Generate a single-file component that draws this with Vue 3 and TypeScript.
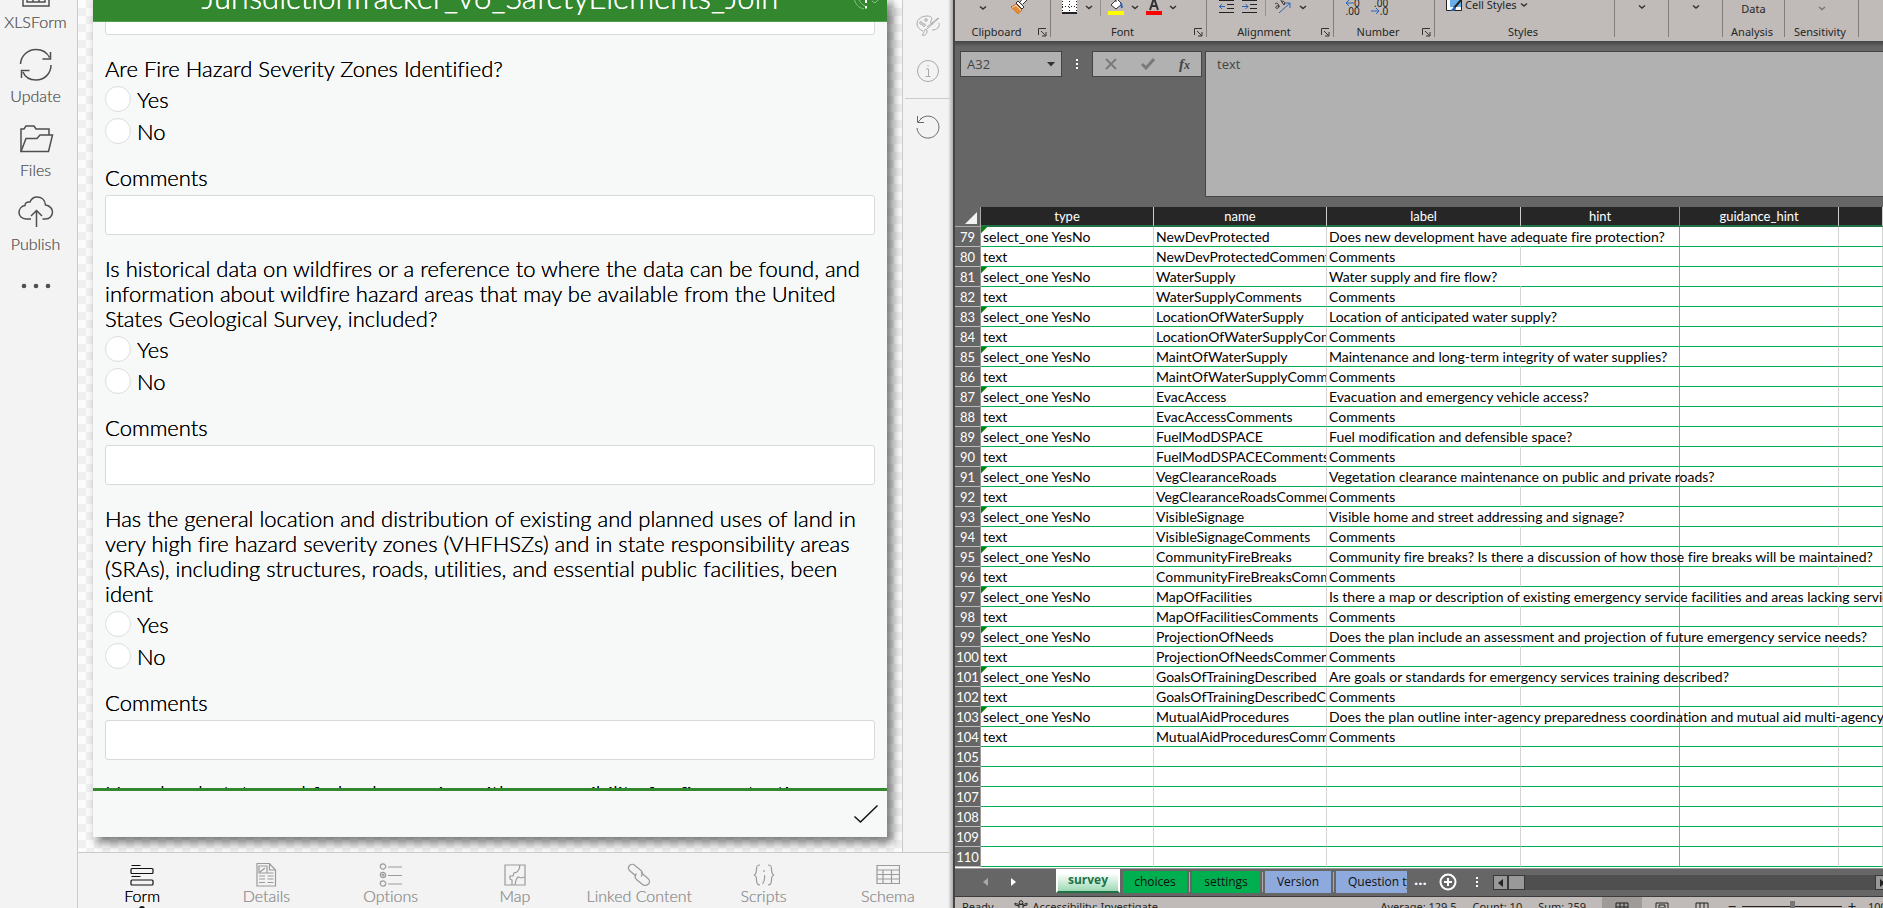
<script setup lang="ts">
import { ref } from 'vue'

interface Question {
  id: string
  text: string
}

const questions: Question[] = [
  { id: 'zones', text: 'Are Fire Hazard Severity Zones Identified?' },
  {
    id: 'history',
    text: 'Is historical data on wildfires or a reference to where the data can be found, and information about wildfire hazard areas that may be available from the United States Geological Survey, included?',
  },
  {
    id: 'location',
    text: 'Has the general location and distribution of existing and planned uses of land in very high fire hazard severity zones (VHFHSZs) and in state responsibility areas (SRAs), including structures, roads, utilities, and essential public facilities, been ident',
  },
]
const nextQuestion = 'Have local, state, and federal agencies with responsibility for fire protection'

const sideItems = ['XLSForm', 'Update', 'Files', 'Publish']
const navItems = ['Form', 'Details', 'Options', 'Map', 'Linked Content', 'Scripts', 'Schema']

interface Row {
  n: number
  name: string
  label: string
  question: boolean
  wide: boolean
}

const pairs: [string, string][] = [
  ['NewDevProtected', 'Does new development have adequate fire protection?'],
  ['WaterSupply', 'Water supply and fire flow?'],
  ['LocationOfWaterSupply', 'Location of anticipated water supply?'],
  ['MaintOfWaterSupply', 'Maintenance and long-term integrity of water supplies?'],
  ['EvacAccess', 'Evacuation and emergency vehicle access?'],
  ['FuelModDSPACE', 'Fuel modification and defensible space?'],
  ['VegClearanceRoads', 'Vegetation clearance maintenance on public and private roads?'],
  ['VisibleSignage', 'Visible home and street addressing and signage?'],
  ['CommunityFireBreaks', 'Community fire breaks? Is there a discussion of how those fire breaks will be maintained?'],
  ['MapOfFacilities', 'Is there a map or description of existing emergency service facilities and areas lacking service?'],
  ['ProjectionOfNeeds', 'Does the plan include an assessment and projection of future emergency service needs?'],
  ['GoalsOfTrainingDescribed', 'Are goals or standards for emergency services training described?'],
  ['MutualAidProcedures', 'Does the plan outline inter-agency preparedness coordination and mutual aid multi-agency agreements?'],
]

const rows: Row[] = pairs.flatMap(([name, label], i) => [
  { n: 79 + i * 2, name, label, question: true, wide: label.length > 80 },
  { n: 80 + i * 2, name: name + 'Comments', label: 'Comments', question: false, wide: false },
])
for (let n = 105; n <= 110; n++) rows.push({ n, name: '', label: '', question: false, wide: false })

const cellRef = ref('A32')
const formula = ref('text')
const zoom = ref(50)
</script>

<template>
  <div class="desktop">
    <section class="survey">
      <nav class="side" aria-label="Survey actions">
        <button v-for="item in sideItems" :key="item" class="side-item" type="button">
          <svg v-if="item === 'XLSForm'" width="36" height="36" viewBox="0 0 36 36">
            <rect x="5" y="2" width="26" height="31" />
            <path d="M9 14h18v15H9zM15 14v15M21 14v15M9 19h18M9 24h18" />
          </svg>
          <svg v-else-if="item === 'Update'" width="36" height="36" viewBox="0 0 36 36">
            <path d="M2.500 17C3 8.500 10 2.500 18 2.500c6 0 11 3 13.500 8M32.500 5v7h-8" />
            <path d="M33 18c0 9-7 15-15 15-6 0-11-3-13-8M3.500 31v-7.500h8" />
          </svg>
          <svg v-else-if="item === 'Files'" width="36" height="36" viewBox="0 0 36 36">
            <path d="M3 30.500V8h3l2-3h8l2 3h13v6" />
            <path d="M3 30.500h27.500L34.500 14H22l-3 3.500H8z" />
          </svg>
          <svg v-else width="36" height="36" viewBox="0 0 36 36">
            <path d="M13 24H8c-4 0-7-3-7-6.500S3.500 11 7 10.500c0-2.500 2-4 5-3.500 1.500-3.500 4-5 7-5 4.500 0 8 3 8.500 8 4 .5 7 3.500 7 7 0 4-3 7-7 7h-3" />
            <path d="M18.500 32V15.500M13 21l5.500-5.500L24 21" />
          </svg>
          <span>{{ item }}</span>
        </button>
        <button class="more" type="button" aria-label="More">
          <svg width="30" height="6" viewBox="0 0 30 6">
            <circle cx="3" cy="3" r="2.300" /><circle cx="15" cy="3" r="2.300" /><circle cx="27" cy="3" r="2.300" />
          </svg>
        </button>
      </nav>

      <div class="work">
        <div class="stage">
          <div class="canvas">
            <form class="card" @submit.prevent>
              <header class="card-head">
                <h1>JurisdictionTracker_v6_SafetyElements_Join</h1>
                <svg class="sat" width="28" height="24" viewBox="0 0 28 24">
                  <path d="M2 10c1 6 5 10 10 11M6 9c1 4 4 8 7 9M20 13l3 2 4-4" />
                  <path class="bang" d="M14 8v7M14 18v2.500" />
                </svg>
              </header>
              <div class="card-body">
                <div class="fields">
                  <input class="box" type="text" aria-label="Previous comments" />
                  <fieldset v-for="q in questions" :key="q.id">
                    <legend>{{ q.text }}</legend>
                    <label class="choice"><input type="radio" :name="q.id" value="yes" />Yes</label>
                    <label class="choice"><input type="radio" :name="q.id" value="no" />No</label>
                    <label class="caption" :for="q.id + '-c'">Comments</label>
                    <input :id="q.id + '-c'" class="box" type="text" />
                  </fieldset>
                  <p class="next">{{ nextQuestion }}</p>
                </div>
              </div>
              <footer class="card-foot">
                <button type="submit" aria-label="Submit">
                  <svg width="26" height="20" viewBox="0 0 26 20"><path d="M1.500 12.500l6 5.500L24.500 1.500" /></svg>
                </button>
              </footer>
            </form>
          </div>
          <aside class="rail">
            <button type="button" aria-label="Style">
              <svg width="24" height="24" viewBox="0 0 24 24">
                <path d="M7 17c-3-1-6-4-6-7 0-5 5-8 10-8 4 0 6 2 4 5-1 2 0 3 2 3M23 9c1 4-2 7-7 7" />
                <circle cx="5" cy="9" r="1.300" /><circle cx="10" cy="6" r="1.300" /><circle cx="8" cy="11" r="1.300" />
                <path d="M23 4L11 15M22 4L11 13M10 15c-2 0-2 5-4 6 3 1 5-1 5-4z" />
              </svg>
            </button>
            <button type="button" aria-label="Information">
              <svg width="24" height="24" viewBox="0 0 24 24">
                <circle cx="12" cy="12" r="10.500" />
                <path d="M10 10h2.500v7M9.500 17.500h5M12 6v1.500" />
              </svg>
            </button>
            <hr />
            <button class="undo" type="button" aria-label="Undo">
              <svg width="24" height="24" viewBox="0 0 24 24">
                <path d="M1 13a11 11 0 1 0 3-8.500M1.500 1v6.500H8M2 7l4-4" />
              </svg>
            </button>
          </aside>
        </div>

        <nav class="bottom" aria-label="Views">
          <button v-for="item in navItems" :key="item" type="button" :class="{ active: item === 'Form' }">
            <svg v-if="item === 'Form'" width="24" height="24" viewBox="0 0 24 24">
              <path d="M1.500 2.500h9M1.500 13.500h9" />
              <rect x="1" y="5.500" width="22" height="5" rx="1" /><rect x="1" y="17" width="22" height="5" rx="1" />
            </svg>
            <svg v-else-if="item === 'Details'" width="24" height="24" viewBox="0 0 24 24">
              <path d="M3 .5h12.500L21.500 7v16H3zM15.500 .5V7h6M5 3h8v7H5zM6 9l5-4M5 13h6M5 16h6M5 19.500h6M13.500 10h6M13.500 13h6M13.500 16h6M13.500 19.500h6" />
            </svg>
            <svg v-else-if="item === 'Options'" width="24" height="24" viewBox="0 0 24 24">
              <circle cx="4" cy="3.500" r="2.700" /><circle cx="4" cy="12" r="2.700" /><circle cx="4" cy="20.500" r="2.700" />
              <circle cx="4" cy="12" r="1" />
              <path d="M9 4h14M9 12.500h14M9 21h14" />
            </svg>
            <svg v-else-if="item === 'Map'" width="24" height="24" viewBox="0 0 24 24">
              <path d="M2 2h20v20H2zM17 2c0 3-1 5-3 7l-3 1-1 3H7v3l2 1v5M22 14l-4 1-3-1-2 3-1 5" />
            </svg>
            <svg v-else-if="item === 'Linked Content'" width="24" height="24" viewBox="0 0 24 24">
              <path d="M9 13L3 8C1 6 1 4 2.500 2.500S6.500 1 8 2.500l6 5c2 2 2 4 0 6" />
              <path d="M14 9.500l7 6c2 2 2 4 .5 5.500S17 23 15.500 21.500l-6-5c-2-2-2-4 0-6" />
            </svg>
            <svg v-else-if="item === 'Scripts'" width="24" height="24" viewBox="0 0 24 24">
              <path d="M8 2C5 2 4.500 3 4.500 6S4 11.500 2 12c2 .5 2.500 2 2.500 5S5 22 8 22M16 2c3 0 3.500 1 3.500 4s.5 5.500 2.500 6c-2 .5-2.500 2-2.500 5s-.5 5-3.500 5M12 7v2M12.500 12c.5 4-.5 7-2 9" />
            </svg>
            <svg v-else width="24" height="24" viewBox="0 0 24 24">
              <path d="M1 2.500h22.500v18H1zM1 7h22.500M1 11.500h22.500M1 16h22.500M7 7v13.500M15.500 7v13.500" />
            </svg>
            <span>{{ item }}</span>
          </button>
        </nav>
      </div>
    </section>

    <section class="excel">
      <div class="ribbon">
        <div class="group g-clip">
          <div class="tools">
            <svg width="8" height="24" viewBox="0 0 8 24"><path class="chev" d="M1 14.500l3 2.500 3-2.500" /></svg>
            <svg width="18" height="24" viewBox="0 0 18 24">
              <path fill="#f3d3ac" stroke="#c66a1c" d="M2 15l5-3 6 6-4 4z" /><path fill="#e58a3a" d="M3 16l4-2 5 5-3 3z" />
              <path fill="#fff" stroke="#333" d="M7 11l2-2 6 6-2 2zM11 10l4-5h3v3l-4 4" />
            </svg>
          </div>
          <div class="name"><span>Clipboard</span><svg class="launch" width="9" height="9" viewBox="0 0 9 9"><path d="M.5 7V.5H8M3 3l4.500 4.500M8 4v4H4" /></svg></div>
        </div>
        <div class="group g-font">
          <div class="tools">
            <svg width="16" height="24" viewBox="0 0 16 24"><path fill="#fff" d="M0 0h15v22H0z" /><path stroke="#222" stroke-dasharray="1 2" d="M.5 0v20M7.500 0v20M14.500 0v20M0 14.500h15" /><path stroke="#222" stroke-width="2" d="M0 21h15" /></svg>
            <svg width="8" height="24" viewBox="0 0 8 24"><path class="chev" d="M1 14l3 2.500L7 14" /></svg>
            <i class="split"></i>
            <svg width="16" height="24" viewBox="0 0 16 24"><path fill="#fff" stroke="#333" d="M3 13l6-6 5 5-6 5z" /><path stroke="#333" d="M8 4v6" /><path stroke="#2b64b5" stroke-width="2" d="M13 11l1 5" /><path fill="#ff0" d="M0 19h16v4H0z" /></svg>
            <svg width="8" height="24" viewBox="0 0 8 24"><path class="chev" d="M1 14l3 2.500L7 14" /></svg>
            <svg width="16" height="24" viewBox="0 0 16 24"><path stroke="#333" stroke-width="2" d="M4 18L8 6l4 12M5.500 14h5" /><path fill="red" d="M0 19h16v4H0z" /></svg>
            <svg width="8" height="24" viewBox="0 0 8 24"><path class="chev" d="M1 14l3 2.500L7 14" /></svg>
          </div>
          <div class="name"><span>Font</span><svg class="launch" width="9" height="9" viewBox="0 0 9 9"><path d="M.5 7V.5H8M3 3l4.500 4.500M8 4v4H4" /></svg></div>
        </div>
        <div class="group g-align">
          <div class="tools">
            <svg width="15" height="24" viewBox="0 0 15 24"><path stroke="#222" d="M0 8.500h15M8 12.500h7M8 16.500h7M0 20.500h15" /><path stroke="#2b64b5" d="M0 14.500h6M3 12l-2.500 2.500L3 17" /></svg>
            <svg width="15" height="24" viewBox="0 0 15 24"><path stroke="#222" d="M0 8.500h15M8 12.500h7M8 16.500h7M0 20.500h15" /><path stroke="#2b64b5" d="M0 14.500h6M3.500 12L6 14.500 3.500 17" /></svg>
            <i class="split"></i>
            <svg width="17" height="24" viewBox="0 0 17 24"><path stroke="#333" d="M1 12c2-2 4 0 4 3M5 14c-2-1-4 1-3 2s3 0 3-2M6 7l4 6M7 10c2-2 5 0 3 3" /><path stroke="#2b64b5" d="M5 21L16 11M11 11h5v5" /></svg>
            <svg width="8" height="24" viewBox="0 0 8 24"><path class="chev" d="M1 14l3 2.500L7 14" /></svg>
          </div>
          <div class="name"><span>Alignment</span><svg class="launch" width="9" height="9" viewBox="0 0 9 9"><path d="M.5 7V.5H8M3 3l4.500 4.500M8 4v4H4" /></svg></div>
        </div>
        <div class="group g-num">
          <div class="tools">
            <span class="dec"><b><svg width="9" height="8" viewBox="0 0 9 8"><path stroke="#2b64b5" d="M9 4H1M4 1L1 4l3 3" /></svg>0</b><b>.00</b></span>
            <span class="dec"><b>.00</b><b><svg width="9" height="8" viewBox="0 0 9 8"><path stroke="#2b64b5" d="M0 4h8M5 1l3 3-3 3" /></svg>.0</b></span>
          </div>
          <div class="name"><span>Number</span><svg class="launch" width="9" height="9" viewBox="0 0 9 9"><path d="M.5 7V.5H8M3 3l4.500 4.500M8 4v4H4" /></svg></div>
        </div>
        <div class="group g-styles">
          <div class="tools">
            <svg width="16" height="24" viewBox="0 0 16 24"><path fill="#fff" stroke="#222" d="M.5 4.500h15v14H.5z" /><path fill="#69aee8" d="M4 8h11v7H4z" /><path stroke="#222" stroke-width="2" d="M15 8l-7 8" /><path fill="#2b64b5" d="M4 18c3 0 2-3 5-3l1 2c-1 2-4 3-6 1z" /></svg>
            <span>Cell Styles</span>
            <svg width="8" height="24" viewBox="0 0 8 24"><path class="chev" d="M1 11.500L4 14l3-2.500" /></svg>
          </div>
          <div class="name"><span>Styles</span></div>
        </div>
        <div v-for="g in 2" :key="g" class="group g-small">
          <div class="tools"><svg width="8" height="24" viewBox="0 0 8 24"><path class="chev" d="M1 13.500L4 16l3-2.500" /></svg></div>
          <div class="name"></div>
        </div>
        <div class="group g-data"><div class="tools"><span>Data</span></div><div class="name"><span>Analysis</span></div></div>
        <div class="group g-sens">
          <div class="tools"><svg width="8" height="24" viewBox="0 0 8 24"><path class="chev faint" d="M1 15l3 2.500L7 15" /></svg></div>
          <div class="name"><span>Sensitivity</span></div>
        </div>
      </div>

      <div class="fbar">
        <div class="namebox">
          <input v-model="cellRef" type="text" aria-label="Name box" />
          <button type="button" aria-label="Names"><svg width="8" height="5" viewBox="0 0 8 5"><path fill="#333" d="M0 0h8L4 4.500z" /></svg></button>
        </div>
        <i class="grip"></i>
        <div class="fx">
          <button type="button" aria-label="Cancel"><svg width="12" height="12" viewBox="0 0 12 12"><path stroke="#7a7a7a" stroke-width="2" d="M1 1l10 10M11 1L1 11" /></svg></button>
          <button type="button" aria-label="Enter"><svg width="14" height="12" viewBox="0 0 14 12"><path stroke="#7a7a7a" stroke-width="3" d="M1 6l4 4 8-9" /></svg></button>
          <button class="fn" type="button">f<small>x</small></button>
        </div>
        <textarea v-model="formula" aria-label="Formula"></textarea>
      </div>

      <div class="sheet">
        <table>
          <colgroup><col class="c-n" /><col class="c-a" /><col class="c-a" /><col class="c-l" /><col class="c-h" /><col class="c-h" /><col /></colgroup>
          <thead>
            <tr>
              <td class="corner"><svg width="12" height="12" viewBox="0 0 12 12"><path fill="#f2f2f2" d="M12 0v12H0z" /></svg></td>
              <th>type</th><th>name</th><th>label</th><th class="freeze">hint</th><th>guidance_hint</th><th></th>
            </tr>
          </thead>
          <tbody>
            <tr v-for="r in rows" :key="r.n" :class="{ q: r.question, wide: r.wide }">
              <th scope="row">{{ r.n }}</th>
              <td class="type">{{ r.name ? (r.question ? 'select_one YesNo' : 'text') : '' }}</td>
              <td class="clip">{{ r.name }}</td>
              <td class="lab">{{ r.label }}</td>
              <td class="freeze"></td>
              <td class="gh"></td>
              <td></td>
            </tr>
          </tbody>
        </table>
      </div>

      <div class="tabs">
        <div class="arrows">
          <button type="button" aria-label="Previous sheets"><svg width="5" height="8" viewBox="0 0 5 8"><path fill="#aaa" d="M5 0v8L0 4z" /></svg></button>
          <button type="button" aria-label="Next sheets"><svg width="5" height="8" viewBox="0 0 5 8"><path fill="#fff" d="M0 0v8l5-4z" /></svg></button>
        </div>
        <button class="tab current" type="button">survey</button>
        <button class="tab green choices" type="button">choices</button>
        <i class="bar"></i>
        <button class="tab green settings" type="button">settings</button>
        <i class="bar"></i>
        <button class="tab blue" type="button">Version</button>
        <i class="bar"></i>
        <button class="tab blue cut" type="button">Question types</button>
        <span class="dots">...</span>
        <button class="add" type="button" aria-label="New sheet"><svg width="18" height="18" viewBox="0 0 18 18"><circle cx="9" cy="9" r="7.500" /><path d="M9 5v8M5 9h8" /></svg></button>
        <i class="grip"></i>
        <div class="scroll">
          <button type="button" aria-label="Scroll left"><svg width="5" height="8" viewBox="0 0 5 8"><path fill="#222" d="M5 0v8L0 4z" /></svg></button>
          <i class="thumb"></i>
          <i class="track"></i>
          <button class="end" type="button" aria-label="Scroll right"><svg width="5" height="8" viewBox="0 0 5 8"><path fill="#222" d="M0 0v8l5-4z" /></svg></button>
        </div>
      </div>

      <div class="status">
        <span class="ready">Ready</span>
        <svg width="14" height="16" viewBox="0 0 14 16"><path d="M1 3c3 2 9 2 12 0M5 5v5l-2 5M9 5v5l2 5M5 10h4M1 3v2l4 1M13 3v2L9 6" /><circle cx="7" cy="2.500" r="1.800" /></svg>
        <span>Accessibility: Investigate</span>
        <span class="sum first">Average: 129.5</span>
        <span class="sum">Count: 10</span>
        <span class="sum">Sum: 259</span>
        <button class="view on" type="button" aria-label="Normal"><svg width="14" height="14" viewBox="0 0 14 14"><path d="M1 1h12v12H1zM1 5h12M1 9h12M5 1v12M9 1v12" /></svg></button>
        <button class="view" type="button" aria-label="Page layout"><svg width="14" height="14" viewBox="0 0 14 14"><path d="M1 1h12v12H1zM4 3h6v9H4zM5 6h4M5 8h4" /></svg></button>
        <button class="view" type="button" aria-label="Page breaks"><svg width="14" height="14" viewBox="0 0 14 14"><path d="M1 1h12v12H1zM5 1v8M9 1v8M1 9h8" /></svg></button>
        <button class="sign minus" type="button">−</button>
        <input v-model="zoom" type="range" min="0" max="100" aria-label="Zoom" />
        <button class="sign" type="button">+</button>
        <span class="pct">100%</span>
      </div>
    </section>
  </div>
</template>

<style>
html, body { margin: 0; overflow: hidden; }
</style>

<style scoped>
* { box-sizing: border-box; }
button { margin: 0; padding: 0; border: 0; background: none; font: inherit; color: inherit; }
svg { display: block; flex: none; fill: none; }
i { flex: none; }
.desktop {
  display: grid;
  grid-template-columns: minmax(0, 953fr) minmax(0, 930fr);
  height: 100vh;
  overflow: hidden;
  background: #f3f3f3;
  font-variant-ligatures: none;
}

/* Survey designer */
.survey { display: flex; min-height: 0; font-family: Lato, sans-serif; font-weight: 300; color: #000; text-shadow: 0 0 0 currentColor; }
.side { width: 78px; flex: none; border-right: 1px solid #cacaca; background: #f3f3f3; display: flex; flex-direction: column; overflow: hidden; padding-right: 6px; }
.side-item { height: 74px; flex: none; padding-top: 8px; display: flex; flex-direction: column; align-items: center; gap: 2px; font-size: 16px; line-height: 21px; color: #666; text-shadow: inherit; }
.side-item:first-child { margin-top: -35px; }
.side-item svg { stroke: #4f4f4f; stroke-width: 1.500; }
.more { align-self: center; margin-top: 22px; }
.more svg { fill: #4f4f4f; }
.work { flex: 1; min-width: 0; display: flex; flex-direction: column; }
.stage { flex: 1; min-height: 0; display: flex; }
.canvas {
  flex: 1; min-width: 0; overflow: hidden; padding: 0 15px 15px;
  background: repeating-conic-gradient(#f0f0f0 0 25%, #fcfcfc 0 50%) 0 0 / 16px 16px;
}
.card { height: 100%; margin: 0; display: flex; flex-direction: column; background: #f7f8f8; box-shadow: 5px 5px 9px 1px rgba(0, 0, 0, .5); }
.card-head { position: relative; flex: none; height: 22px; padding-bottom: 6px; overflow: hidden; display: flex; align-items: flex-end; justify-content: center; background: #32872f; border-bottom: 1px solid #4fa04c; }
.card-head h1 { margin: 0; font-size: 31px; line-height: 36px; font-weight: 300; color: #fff; white-space: nowrap; }
.sat { position: absolute; right: 7px; bottom: 9px; stroke: #8fc08d; stroke-width: 1; }
.sat .bang { stroke: #fff; stroke-width: 2; }
.card-body { flex: 1; min-height: 0; overflow: hidden; padding: 0 12px; }
.fields { margin-top: -27px; font-size: 22px; line-height: 25px; }
fieldset { margin: 21px 0 0; padding: 0; border: 0; min-width: 0; display: flex; flex-direction: column; }
legend { padding: 0; margin-bottom: 5px; }
.choice { display: flex; align-items: center; gap: 6px; height: 26px; margin-bottom: 6px; }
.choice input { appearance: none; width: 26px; height: 26px; margin: 0; border: 1px solid #dcdede; border-radius: 50%; background: #fff; }
.caption { margin: 15px 0 5px; }
.box { display: block; width: 100%; height: 40px; padding: 0 8px; border: 1px solid #d8dada; border-radius: 3px; background: #fff; font: inherit; }
.next { margin: 21px 0 0; white-space: nowrap; }
.card-foot { flex: none; height: 49px; border-top: 3px solid #32872f; display: flex; align-items: center; justify-content: flex-end; padding-right: 8px; }
.card-foot svg { stroke: #111; stroke-width: 1.500; }
.rail { width: 51px; flex: none; border-left: 1px solid #cacaca; padding: 14px 3px 0 2px; display: flex; flex-direction: column; align-items: center; background: linear-gradient(to left, #aaa, #f3f3f3 5px); }
.rail button + button { margin-top: 21px; }
.rail svg { stroke: #a9a9a9; stroke-width: 1; }
.rail .undo { margin-top: 16px; }
.rail .undo svg { stroke: #6a6a6a; }
.rail hr { width: 100%; margin: 15px 0 0; border: 0; border-top: 1px solid #cacaca; }
.bottom { flex: none; height: 56px; padding: 10px 3px 0 2px; border-top: 1px solid #cacaca; display: flex; background: linear-gradient(to left, #aaa, #f3f3f3 5px); overflow: hidden; }
.bottom button { flex: 1 1 0; min-width: 0; display: flex; flex-direction: column; align-items: center; font-size: 16px; line-height: 21px; color: #979797; text-shadow: inherit; white-space: nowrap; }
.bottom svg { stroke: #9b9b9b; stroke-width: 1.200; margin-bottom: -2px; }
.bottom .active { color: #000; }
.bottom .active svg { stroke: #111; }
.bottom .active::after { content: ''; flex: none; width: 6px; height: 6px; border-radius: 50%; background: #111; }

/* Spreadsheet */
.excel { display: flex; flex-direction: column; min-height: 0; border-left: 2px solid #444; background: #666; font-family: "Noto Sans", sans-serif; font-size: 11px; color: #262626; }
.ribbon { flex: none; height: 41px; padding-bottom: 4px; overflow: hidden; display: flex; background: #c0bbb8; }
.group { flex: none; display: flex; flex-direction: column; justify-content: flex-end; border-right: 1px solid #827e7b; }
.g-clip { width: 96px; } .g-font { width: 156px; } .g-align { width: 127px; } .g-num { width: 101px; }
.g-styles { width: 180px; } .g-small { width: 54px; } .g-data { width: 62px; } .g-sens { width: 74px; }
.tools { flex: none; height: 24px; margin-bottom: 11px; display: flex; align-items: center; justify-content: center; gap: 7px; white-space: nowrap; line-height: 14px; }
.g-clip .tools { justify-content: flex-start; padding-left: 24px; gap: 22px; }
.g-font .tools { justify-content: flex-start; padding-left: 11px; }
.g-align .tools { justify-content: flex-start; padding-left: 12px; gap: 8px; }
.g-num .tools { justify-content: flex-start; padding-left: 11px; gap: 11px; }
.g-styles .tools { justify-content: flex-start; padding-left: 11px; gap: 3px; }
.g-styles .tools span { margin-top: 2px; }
.g-data .tools span { margin-top: 10px; }
.split { width: 1px; height: 24px; background: #96918e; }
.chev { stroke: #333; stroke-width: 1.500; }
.faint { stroke: #777; }
.dec { margin-top: 6px; display: flex; flex-direction: column; align-items: flex-end; font-size: 10px; line-height: 8px; color: #222; }
.dec b { display: flex; font-weight: 400; }
.name { flex: none; height: 10px; line-height: 10px; display: flex; align-items: center; padding-right: 3px; }
.name span { flex: 1; text-align: center; }
.launch { stroke: #333; stroke-width: 1; }

.fbar { flex: none; height: 166px; padding: 10px 0 9px 5px; display: flex; align-items: flex-start; background: linear-gradient(#444, #666 6px); font-family: "Open Sans", sans-serif; font-size: 13px; color: #444; }
.namebox, .fx { height: 26px; border: 1px solid #444; background: #b1b1b1; display: flex; align-items: center; }
.namebox { width: 102px; flex: none; padding-right: 6px; }
.namebox input { flex: 1; min-width: 0; padding: 0 6px; border: 0; background: none; font: inherit; color: inherit; }
.grip { width: 2px; height: 10px; background: repeating-linear-gradient(#fff 0 2px, transparent 2px 4px); }
.fbar .grip { margin: 8px 14px 0; }
.fx { width: 110px; flex: none; justify-content: space-between; padding: 0 11px 0 12px; }
.fn { font: italic bold 15px "Liberation Serif", serif; }
.fn small { font-size: 12px; }
.fbar textarea { flex: 1; min-width: 0; height: 146px; margin-left: 3px; padding: 3px 11px; border: 1px solid #444; border-right: 0; background: #b1b1b1; font: inherit; line-height: 18px; color: inherit; resize: none; outline: none; }

.sheet { flex: 1; min-height: 0; overflow: hidden; background: #fff; border-bottom: 1px solid #999; font-family: Lato, sans-serif; font-size: 14px; line-height: 18px; color: #000; }
table { width: 100%; table-layout: fixed; border-collapse: separate; border-spacing: 0; }
.c-n { width: 26px; } .c-a { width: 173px; } .c-l { width: 194px; } .c-h { width: 159px; }
td, th { height: 20px; padding: 0; font-weight: 400; white-space: nowrap; border-right: 1px solid #d4d4d4; border-bottom: 1px solid #00b050; }
thead th { background: #262626; color: #fff; font-size: 13px; text-align: center; line-height: 18px; border-right-color: #ccc; border-bottom: 2px solid #217346; }
.corner { background: #666; border-right-color: #aaa; border-bottom: 1px solid #aaa; }
.corner svg { margin: 2px 0 0 10px; }
tbody th { background: #666; color: #fff; font-size: 13px; border-right-color: #999; border-bottom-color: #bbb; text-align: center; }
tbody td { padding-left: 2px; }
.q .type { background: linear-gradient(135deg, #087f08 4px, transparent 5px); }
.clip { overflow: hidden; }
.q .lab, .wide .gh { border-right-color: transparent; }
.freeze { border-right-color: #999; }

.tabs { flex: none; height: 28px; display: flex; align-items: flex-start; border-bottom: 1px solid #3c3c3c; font-family: "Open Sans", sans-serif; font-size: 12px; line-height: 20px; color: #111; }
.arrows { width: 101px; flex: none; height: 25px; padding-left: 28px; display: flex; align-items: center; gap: 23px; }
.tab { flex: none; height: 22px; margin-top: 2px; white-space: nowrap; text-align: center; }
.current { width: 64px; height: 24px; margin: 0 3px 0 0; border: 2px solid #fff; border-top: 0; border-bottom: 2px solid #217346; background: linear-gradient(#fff 20%, #9bd9b4); color: #217346; font-weight: 700; }
.green { background: #00b050; }
.choices { width: 64px; } .settings { width: 68px; }
.blue { width: 66px; background: #8ea9db; }
.cut { width: 71px; padding-left: 12px; overflow: hidden; text-align: left; }
.bar { width: 1px; height: 20px; margin: 3px 2px 0; background: #aaa; }
.dots { width: 25px; margin-left: 7px; color: #fff; font-size: 15px; font-weight: 700; }
.add { margin-top: 4px; }
.add svg { stroke: #fff; stroke-width: 2; }
.tabs .grip { margin: 8px 15px 0 19px; }
.scroll { flex: 1; min-width: 0; height: 15px; margin-top: 6px; display: flex; overflow: hidden; background: #4f4f4f; }
.scroll button { width: 15px; flex: none; border: 1px solid #383838; background: #999; display: grid; place-items: center; }
.scroll .end { margin-right: -7px; }
.thumb { width: 17px; border: 1px solid #383838; background: #999; }
.track { flex: 1; }

.status { flex: none; height: 11px; overflow: hidden; background: #c0bbb8; display: flex; align-items: flex-start; line-height: 20px; white-space: nowrap; color: #222; }
.status > svg { margin: 3px 5px 0 20px; stroke: #222; }
.ready { padding-left: 7px; }
.sum { margin-left: 16px; }
.first { margin-left: auto; }
.view { width: 40px; flex: none; height: 20px; padding: 3px 0 0 13px; }
.view.on { margin-left: 16px; background: #9f9b99; }
.view svg { stroke: #222; stroke-width: 1; }
.sign { font-size: 15px; line-height: 18px; width: 16px; flex: none; }
.minus { margin-left: 2px; }
.status input { appearance: none; width: 100px; height: 20px; margin: 0 2px; flex: none; background: linear-gradient(#222, #222) 0 9px / 100% 1px no-repeat; }
.status input::-webkit-slider-thumb { appearance: none; width: 5px; height: 12px; background: #777; }
.pct { width: 23px; flex: none; padding-left: 8px; overflow: hidden; }
</style>
